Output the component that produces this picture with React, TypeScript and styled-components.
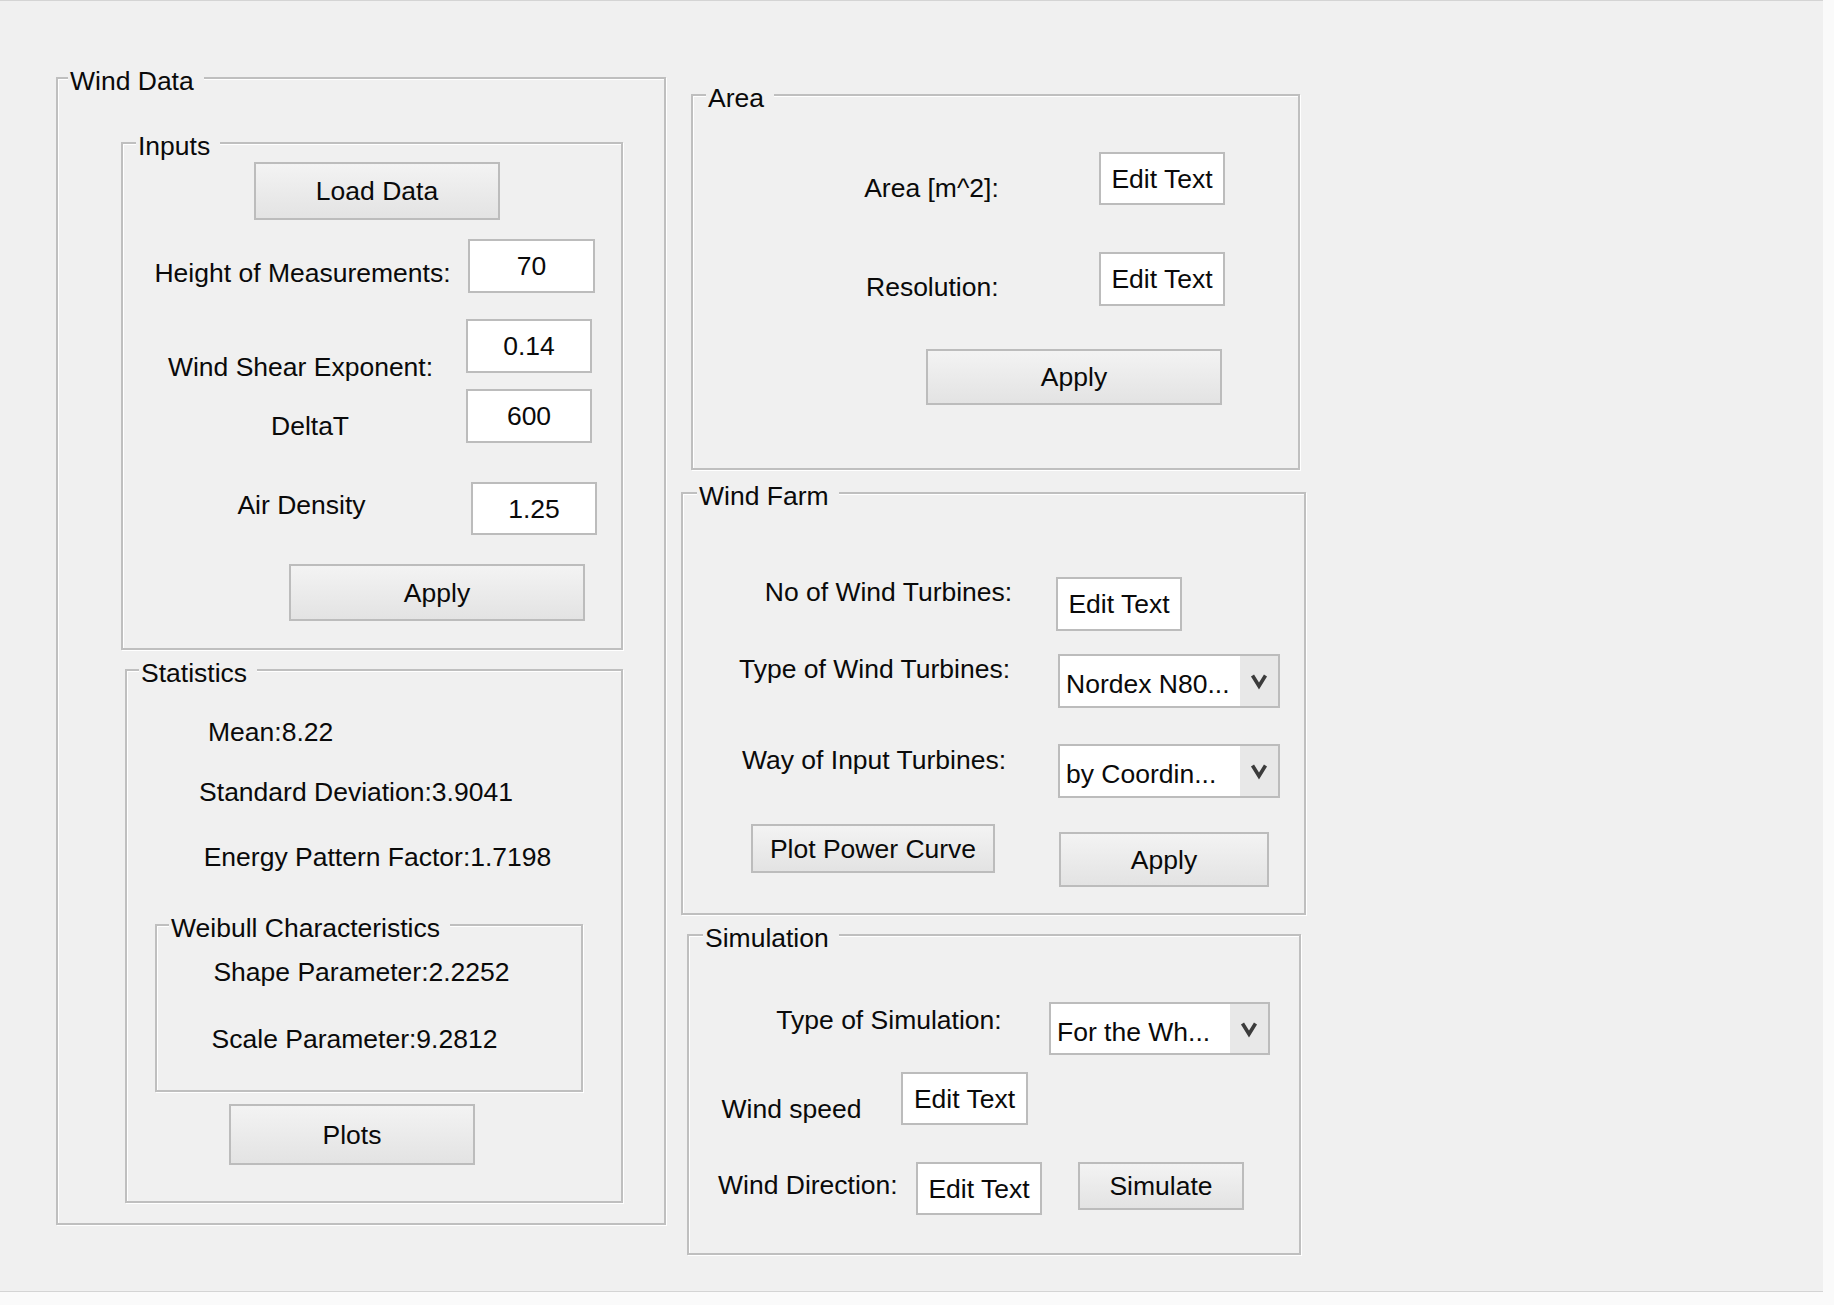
import React from "react";
import styled, { createGlobalStyle } from "styled-components";

const Global = createGlobalStyle`
  html, body { margin: 0; padding: 0; background: #fafafa; }
  body { font-family: "Liberation Sans", Arial, sans-serif; }
  *, *::before, *::after { box-sizing: border-box; }
`;

type Box = { $w?: number; $h?: number; $ml?: number; $mt?: number };

const Figure = styled.main`
  width: 1823px;
  height: 1292px;
  background: #f0f0f0;
  border-top: 1px solid #d4d4d4;
  border-bottom: 1px solid #d4d4d4;
  display: flex;
  align-items: flex-start;
  padding: 76px 0 0 56px;
`;

const Column = styled.div<Box>`
  display: flex;
  flex-direction: column;
  align-items: flex-start;
  flex: none;
  margin-left: ${(p) => p.$ml ?? 0}px;
  margin-top: ${(p) => p.$mt ?? 0}px;
`;

const Panel = styled.section<Box>`
  position: relative;
  flex: none;
  width: ${(p) => p.$w}px;
  height: ${(p) => p.$h}px;
  margin-left: ${(p) => p.$ml ?? 0}px;
  margin-top: ${(p) => p.$mt ?? 0}px;
  border: 2px solid #bfbfbf;
  box-shadow: inset 1px 1px 0 #ffffff, 1px 1px 0 #ffffff;
  display: flex;
  flex-direction: column;
  align-items: flex-start;
`;

const PanelTitle = styled.h2<{ $left?: number }>`
  position: absolute;
  top: -13px;
  left: ${(p) => p.$left ?? 12}px;
  margin: 0;
  padding: 0 10px 0 2px;
  background: #f0f0f0;
  font: 400 26.5px/30px "Liberation Sans", Arial, sans-serif;
  color: #0a0a0a;
  white-space: nowrap;
`;

const Row = styled.div<{ $mt?: number }>`
  display: flex;
  align-items: flex-start;
  flex: none;
  margin-top: ${(p) => p.$mt ?? 0}px;
`;

const Label = styled.span<Box & { $align?: string }>`
  display: block;
  flex: none;
  width: ${(p) => p.$w}px;
  margin-left: ${(p) => p.$ml ?? 0}px;
  margin-top: ${(p) => p.$mt ?? 0}px;
  font-size: 26.5px;
  line-height: 30px;
  color: #0a0a0a;
  white-space: nowrap;
  text-align: ${(p) => p.$align ?? "center"};
`;

const Button = styled.button<Box>`
  flex: none;
  width: ${(p) => p.$w}px;
  height: ${(p) => p.$h}px;
  margin: ${(p) => p.$mt ?? 0}px 0 0 ${(p) => p.$ml ?? 0}px;
  padding: 0;
  border: 2px solid #bcbcbc;
  border-radius: 0;
  background: linear-gradient(#f3f3f3, #e3e3e3);
  font: 400 26.5px/30px "Liberation Sans", Arial, sans-serif;
  color: #0a0a0a;
  display: flex;
  align-items: center;
  justify-content: center;
`;

const Edit = styled.div<Box>`
  flex: none;
  width: ${(p) => p.$w}px;
  height: ${(p) => p.$h}px;
  margin: ${(p) => p.$mt ?? 0}px 0 0 ${(p) => p.$ml ?? 0}px;
  border: 2px solid #bcbcbc;
  background: #ffffff;
  font-size: 26.5px;
  line-height: 30px;
  color: #0a0a0a;
  display: flex;
  align-items: center;
  justify-content: center;
  white-space: nowrap;
`;

const Popup = styled.div<Box>`
  flex: none;
  width: ${(p) => p.$w}px;
  height: ${(p) => p.$h}px;
  margin: ${(p) => p.$mt ?? 0}px 0 0 ${(p) => p.$ml ?? 0}px;
  border: 2px solid #bcbcbc;
  background: #ffffff;
  display: flex;
  align-items: stretch;
`;

const PopupText = styled.span`
  flex: 1;
  display: flex;
  align-items: center;
  padding: 6px 0 0 6px;
  font-size: 26.5px;
  line-height: 30px;
  color: #0a0a0a;
  white-space: nowrap;
  overflow: hidden;
`;

const PopupArrow = styled.span`
  flex: none;
  width: 38px;
  background: #e8e8e8;
  display: flex;
  align-items: center;
  justify-content: center;
`;

const Chevron = () => (
  <svg width="20" height="20" viewBox="0 0 20 20" aria-hidden="true">
    <path d="M3.5 4.5 L10 15 L16.5 4.5" fill="none" stroke="#3c3c3c" strokeWidth="3.6" />
  </svg>
);

const Select = ({ text, ...rest }: Box & { text: string }) => (
  <Popup {...rest}>
    <PopupText>{text}</PopupText>
    <PopupArrow>
      <Chevron />
    </PopupArrow>
  </Popup>
);

export default function App() {
  return (
    <>
      <Global />
      <Figure>
        <Panel $w={610} $h={1148}>
          <PanelTitle $left={10}>Wind Data</PanelTitle>

          <Panel $ml={63} $mt={63} $w={502} $h={508}>
            <PanelTitle $left={13}>Inputs</PanelTitle>
            <Row $mt={18}>
              <Button $ml={131} $w={246} $h={58}>Load Data</Button>
            </Row>
            <Row $mt={19}>
              <Label $ml={31} $mt={19} $w={297}>Height of Measurements:</Label>
              <Edit $ml={17} $w={127} $h={54}>70</Edit>
            </Row>
            <Row $mt={26}>
              <Label $ml={44} $mt={33} $w={267}>Wind Shear Exponent:</Label>
              <Edit $ml={32} $w={126} $h={54}>0.14</Edit>
            </Row>
            <Row $mt={7}>
              <Label $ml={148} $mt={22} $w={75}>DeltaT</Label>
              <Edit $ml={120} $w={126} $h={54}>600</Edit>
            </Row>
            <Row $mt={39}>
              <Label $ml={113} $mt={8} $w={131}>Air Density</Label>
              <Edit $ml={104} $w={126} $h={53}>1.25</Edit>
            </Row>
            <Row $mt={29}>
              <Button $ml={166} $w={296} $h={57}>Apply</Button>
            </Row>
          </Panel>

          <Panel $ml={67} $mt={19} $w={498} $h={534}>
            <PanelTitle $left={12}>Statistics</PanelTitle>
            <Label $ml={81} $mt={46} $w={124}>Mean:8.22</Label>
            <Label $ml={72} $mt={30} $w={314}>Standard Deviation:3.9041</Label>
            <Label $ml={74} $mt={35} $w={353}>Energy Pattern Factor:1.7198</Label>

            <Panel $ml={28} $mt={52} $w={428} $h={168}>
              <PanelTitle $left={12}>Weibull Characteristics</PanelTitle>
              <Label $ml={56} $mt={31} $w={297}>Shape Parameter:2.2252</Label>
              <Label $ml={54} $mt={37} $w={287}>Scale Parameter:9.2812</Label>
            </Panel>

            <Button $ml={102} $mt={12} $w={246} $h={61}>Plots</Button>
          </Panel>
        </Panel>

        <Column $ml={15} $mt={17}>
          <Panel $ml={10} $w={609} $h={376}>
            <PanelTitle $left={13}>Area</PanelTitle>
            <Row $mt={56}>
              <Label $ml={170} $mt={21} $w={137}>Area [m^2]:</Label>
              <Edit $ml={99} $w={126} $h={53}>Edit Text</Edit>
            </Row>
            <Row $mt={47}>
              <Label $ml={173} $mt={20} $w={131}>Resolution:</Label>
              <Edit $ml={102} $w={126} $h={54}>Edit Text</Edit>
            </Row>
            <Row $mt={43}>
              <Button $ml={233} $w={296} $h={56}>Apply</Button>
            </Row>
          </Panel>

          <Panel $mt={22} $w={625} $h={423}>
            <PanelTitle $left={14}>Wind Farm</PanelTitle>
            <Row $mt={83}>
              <Label $ml={80} $w={251}>No of Wind Turbines:</Label>
              <Edit $ml={42} $w={126} $h={54}>Edit Text</Edit>
            </Row>
            <Row $mt={23}>
              <Label $ml={52} $w={279}>Type of Wind Turbines:</Label>
              <Select $ml={44} $w={222} $h={54} text="Nordex N80..." />
            </Row>
            <Row $mt={36}>
              <Label $ml={55} $mt={1} $w={272}>Way of Input Turbines:</Label>
              <Select $ml={48} $w={222} $h={54} text="by Coordin..." />
            </Row>
            <Row $mt={26}>
              <Button $ml={68} $w={244} $h={49}>Plot Power Curve</Button>
              <Button $ml={64} $mt={8} $w={210} $h={55}>Apply</Button>
            </Row>
          </Panel>

          <Panel $ml={6} $mt={19} $w={614} $h={321}>
            <PanelTitle $left={14}>Simulation</PanelTitle>
            <Row $mt={66}>
              <Label $ml={87} $mt={3} $w={226}>Type of Simulation:</Label>
              <Select $ml={47} $w={221} $h={53} text="For the Wh..." />
            </Row>
            <Row $mt={17}>
              <Label $ml={32} $mt={22} $w={141}>Wind speed</Label>
              <Edit $ml={39} $w={127} $h={53}>Edit Text</Edit>
            </Row>
            <Row $mt={37}>
              <Label $ml={29} $mt={8} $w={178}>Wind Direction:</Label>
              <Edit $ml={20} $w={126} $h={53}>Edit Text</Edit>
              <Button $ml={36} $w={166} $h={48}>Simulate</Button>
            </Row>
          </Panel>
        </Column>
      </Figure>
    </>
  );
}
